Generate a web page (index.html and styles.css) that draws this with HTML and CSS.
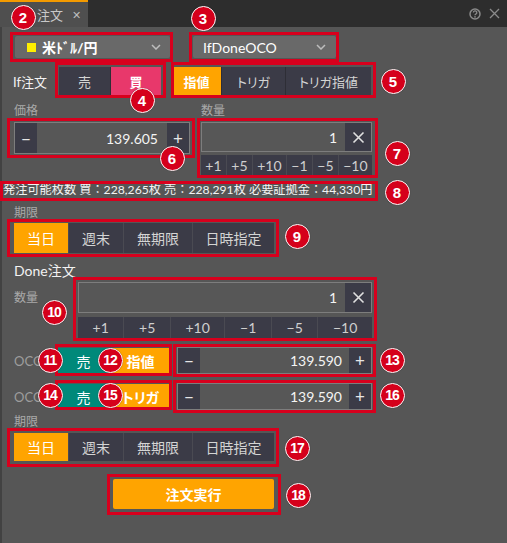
FILE: index.html
```html
<!DOCTYPE html>
<html lang="ja">
<head>
<meta charset="utf-8">
<title>注文</title>
<link rel="stylesheet" href="styles.css">
</head>
<body>
<div class="app">
  <div class="titlebar">
    <div class="tab"><span class="tab-title">注文</span><span class="tab-x">✕</span></div>
    <div class="win-icons">
      <svg class="ico-help" width="12" height="12" viewBox="0 0 12 12"><circle cx="6" cy="6" r="5" fill="none" stroke="#8a8a8a" stroke-width="1.5"/><path d="M4.4 4.6a1.7 1.7 0 1 1 2.4 1.5c-.5.3-.8.6-.8 1.2" fill="none" stroke="#8a8a8a" stroke-width="1.3"/><circle cx="6" cy="8.9" r=".8" fill="#8a8a8a"/></svg>
      <svg class="ico-close" width="11" height="11" viewBox="0 0 11 11"><path d="M1 1l9 9M10 1l-9 9" stroke="#8a8a8a" stroke-width="1.3"/></svg>
    </div>
  </div>

  <div class="content">
    <div class="row1">
      <div class="select sel-ccy"><span class="swatch"></span><span class="sel-text bold">米ﾄﾞﾙ/円</span><svg class="chev" width="10" height="6" viewBox="0 0 10 6"><path d="M1 1l4 4 4-4" fill="none" stroke="#bdbdbd" stroke-width="1.5"/></svg></div>
      <div class="select sel-type"><span class="sel-text">IfDoneOCO</span><svg class="chev" width="10" height="6" viewBox="0 0 10 6"><path d="M1 1l4 4 4-4" fill="none" stroke="#bdbdbd" stroke-width="1.5"/></svg></div>
    </div>

    <div class="row2">
      <div class="lbl-if">If注文</div>
      <div class="group toggle">
        <div class="btn w51">売</div>
        <div class="btn buy w50">買</div>
      </div>
      <div class="group seg-type">
        <div class="btn on w49">指値</div>
        <div class="btn kana w63">トリガ</div>
        <div class="btn kana w85">トリガ指値</div>
      </div>
    </div>

    <div class="row3">
      <div class="col-price">
        <div class="lbl-small">価格</div>
        <div class="stepper st-price">
          <div class="btn sbtn">−</div>
          <div class="val">139.605</div>
          <div class="btn sbtn">+</div>
        </div>
      </div>
      <div class="col-qty">
        <div class="lbl-small">数量</div>
        <div class="qty-input">
          <div class="val">1</div>
          <div class="btn clear"><svg width="13" height="13" viewBox="0 0 13 13"><path d="M1.5 1.5l10 10M11.5 1.5l-10 10" stroke="#e0e0e0" stroke-width="1.6"/></svg></div>
        </div>
        <div class="group qty-btns">
          <div class="btn">+1</div><div class="btn">+5</div><div class="btn">+10</div><div class="btn">−1</div><div class="btn">−5</div><div class="btn">−10</div>
        </div>
      </div>
    </div>

    <div class="info">発注可能枚数 買：228,265枚 売：228,291枚 必要証拠金：44,330円</div>

    <div class="lbl-small lbl-term">期限</div>
    <div class="group period">
      <div class="btn on w54">当日</div>
      <div class="btn w54">週末</div>
      <div class="btn w68">無期限</div>
      <div class="btn w81">日時指定</div>
    </div>

    <div class="done-title">Done注文</div>
    <div class="qty2">
      <div class="lbl-small lbl-qty2">数量</div>
      <div class="qty2-block">
        <div class="qty-input qi2">
          <div class="val">1</div>
          <div class="btn clear"><svg width="13" height="13" viewBox="0 0 13 13"><path d="M1.5 1.5l10 10M11.5 1.5l-10 10" stroke="#e0e0e0" stroke-width="1.6"/></svg></div>
        </div>
        <div class="group qty-btns qb2">
          <div class="btn">+1</div><div class="btn">+5</div><div class="btn">+10</div><div class="btn">−1</div><div class="btn">−5</div><div class="btn">−10</div>
        </div>
      </div>
    </div>

    <div class="oco">
      <div class="lbl-oco">OCO</div>
      <div class="pair">
        <div class="btn sell w53">売</div>
        <div class="btn on w57">指値</div>
      </div>
      <div class="stepper st-oco">
        <div class="btn sbtn">−</div>
        <div class="val">139.590</div>
        <div class="btn sbtn">+</div>
      </div>
    </div>
    <div class="oco oco2">
      <div class="lbl-oco">OCO</div>
      <div class="pair">
        <div class="btn sell w53">売</div>
        <div class="btn on kana w57">トリガ</div>
      </div>
      <div class="stepper st-oco">
        <div class="btn sbtn">−</div>
        <div class="val">139.590</div>
        <div class="btn sbtn">+</div>
      </div>
    </div>

    <div class="lbl-small lbl-term2">期限</div>
    <div class="group period period2">
      <div class="btn on w54">当日</div>
      <div class="btn w54">週末</div>
      <div class="btn w68">無期限</div>
      <div class="btn w81">日時指定</div>
    </div>

    <div class="exec">注文実行</div>
  </div>

  <div class="anno">
    <div class="box b2"></div>
    <div class="box b3"></div>
    <div class="box b4"></div>
    <div class="box b5"></div>
    <div class="box b6"></div>
    <div class="box b7"></div>
    <div class="box b8"></div>
    <div class="box b9"></div>
    <div class="box b10"></div>
    <div class="box b11"></div>
    <div class="box b13"></div>
    <div class="box b14"></div>
    <div class="box b16"></div>
    <div class="box b17"></div>
    <div class="box b18"></div>

    <div class="badge n2">2</div>
    <div class="badge n3">3</div>
    <div class="badge n4">4</div>
    <div class="badge n5">5</div>
    <div class="badge n6">6</div>
    <div class="badge n7">7</div>
    <div class="badge n8">8</div>
    <div class="badge n9">9</div>
    <div class="badge two n10">10</div>
    <div class="badge two n11">11</div>
    <div class="badge two n12">12</div>
    <div class="badge two n13">13</div>
    <div class="badge two n14">14</div>
    <div class="badge two n15">15</div>
    <div class="badge two n16">16</div>
    <div class="badge two n17">17</div>
    <div class="badge two n18">18</div>
  </div>
</div>
</body>
</html>
```

FILE: styles.css
```css
* { box-sizing: border-box; }

html, body {
  margin: 0;
  padding: 0;
  background: #565656;
}

body {
  font-family: Lato, "Noto Sans CJK JP", sans-serif;
  color: #eeeeee;
}

.app {
  position: relative;
  width: 507px;
  height: 543px;
  overflow: hidden;
  background: #565656;
  box-shadow: inset 2px 0 0 #424242;
}

/* title bar */
.titlebar {
  height: 27px;
  background: #2d2d2d;
  display: flex;
  align-items: stretch;
}

.tab {
  width: 88px;
  background: #4f4f4f;
  border-top: 2px solid #f39a00;
  display: flex;
  align-items: center;
  padding-left: 37px;
  gap: 9px;
  color: #c8c8c8;
}

.tab-title { font-size: 13px; }
.tab-x { font-size: 11px; color: #bdbdbd; }

.win-icons {
  margin-left: auto;
  display: flex;
  align-items: center;
  gap: 8px;
  padding-right: 7px;
}

/* content */
.content {
  padding: 9px 0 0 14px;
}

.row1 {
  display: flex;
  gap: 23px;
}

.select {
  height: 22px;
  background: #696969;
  border-radius: 2px;
  display: flex;
  align-items: center;
  font-size: 14px;
  color: #ffffff;
}

.sel-ccy {
  width: 155px;
  margin-left: 1px;
  padding: 0 9px 0 12px;
}

.sel-type {
  width: 143px;
  padding: 0 10px 0 10px;
}

.bold { font-weight: 700; }

.swatch {
  width: 9px;
  height: 9px;
  background: #ffee00;
  margin-right: 6px;
}

.chev { margin-left: auto; }

/* buttons */
.group {
  display: flex;
  gap: 1px;
  background: #2e2e36;
}

.btn {
  display: flex;
  align-items: center;
  justify-content: center;
  background: #3b3b47;
  color: #d4d4d4;
  white-space: nowrap;
}

.btn.on {
  background: #ffa400;
  color: #ffffff;
  font-weight: 700;
}

.btn.buy {
  background: #e8386b;
  color: #ffffff;
  font-weight: 700;
}

.btn.sell {
  background: #00897a;
  color: #ffffff;
}

.kana { font-feature-settings: "palt"; }

.w49 { width: 49px; }
.w50 { width: 50px; }
.w51 { width: 51px; }
.w53 { width: 53px; }
.w54 { width: 54px; }
.w57 { width: 57px; }
.w63 { width: 63px; }
.w68 { width: 68px; }
.w81 { width: 81px; }
.w85 { width: 85px; }

.row2 {
  display: flex;
  align-items: center;
  height: 28px;
  margin-top: 9px;
  font-size: 13px;
}

.lbl-if {
  width: 46px;
  margin-left: -1px;
  color: #f2f2f2;
}

.toggle, .seg-type { height: 28px; border-radius: 2px; }

.seg-type { margin-left: 11px; }

/* price / qty */
.row3 {
  display: flex;
  gap: 11px;
  margin-top: 8px;
  align-items: flex-start;
}

.col-price { width: 176px; }
.col-qty { width: 171px; }

.lbl-small {
  font-size: 12px;
  color: #a9a9a9;
  line-height: 16px;
  height: 16px;
}

.stepper {
  display: flex;
  border: 1px solid #7d7d7d;
  background: #575757;
}

.st-price {
  margin-top: 3px;
  height: 32px;
}

.sbtn {
  width: 22px;
  font-size: 17px;
  color: #e6e6e6;
}

.val {
  flex: 1;
  display: flex;
  align-items: center;
  justify-content: flex-end;
  padding-right: 9px;
  font-size: 14px;
  color: #f4f4f4;
}

.qty-input {
  display: flex;
  margin-top: 3px;
  height: 30px;
  border: 1px solid #7d7d7d;
  background: #575757;
}

.qty-input .val { padding-right: 8px; }

.clear { width: 26px; }

.qty-btns {
  margin-top: 3px;
  height: 21px;
  background: #4a4a52;
}

.qty-btns .btn {
  flex: 1 1 auto;
  font-size: 14px;
  color: #cfcfcf;
}

/* info */
.info {
  margin: 5px 0 0 -11px;
  font-size: 12.2px;
  line-height: 18px;
  color: #f2f2f2;
  white-space: nowrap;
}

.lbl-term { margin-top: 6px; }

.period {
  margin-top: 2px;
  height: 30px;
  width: 260px;
  font-size: 14px;
  background: #4a4a52;
  border-radius: 2px;
}

.period .btn.on { font-weight: 400; }

.done-title {
  margin-top: 9px;
  font-size: 14px;
  line-height: 18px;
  color: #f2f2f2;
}

.qty2 {
  display: flex;
  margin-top: 2px;
}

.lbl-qty2 {
  width: 64px;
  margin-top: 8px;
}

.qty2-block { width: 294px; }

.qi2 { margin-top: 0; height: 31px; }

.qb2 { margin-top: 4px; }

/* OCO */
.oco {
  display: flex;
  align-items: center;
  margin-top: 9px;
}

.oco2 { margin-top: 9px; }

.lbl-oco {
  width: 43px;
  font-size: 13px;
  color: #9d9d9d;
}

.pair {
  display: flex;
  gap: 2px;
  height: 26px;
  background: #6d6d6d;
  font-size: 14px;
}

.st-oco {
  margin-left: 8px;
  width: 195px;
  height: 27px;
}

.st-oco .val { padding-right: 7px; }

.lbl-term2 { margin-top: 4px; }

.period2 { margin-top: 3px; height: 28px; }

.exec {
  margin: 18px 0 0 99px;
  width: 161px;
  height: 30px;
  background: #ffa400;
  border-radius: 2px;
  display: flex;
  align-items: center;
  justify-content: center;
  font-size: 14px;
  font-weight: 700;
  color: #ffffff;
}

/* annotations overlay */
.anno {
  position: absolute;
  left: 0;
  top: 0;
  width: 507px;
  height: 543px;
  pointer-events: none;
}

.box {
  position: absolute;
  border: 3px solid #d7001d;
}

.b2  { left: 10px;  top: 32px;  width: 163px; height: 30px; }
.b3  { left: 189px; top: 32px;  width: 150px; height: 30px; }
.b4  { left: 55px;  top: 62px;  width: 111px; height: 36px; }
.b5  { left: 171px; top: 62px;  width: 205px; height: 36px; }
.b6  { left: 7px;   top: 118px; width: 188px; height: 40px; }
.b7  { left: 197px; top: 118px; width: 181px; height: 60px; }
.b8  { left: 0;     top: 181px; width: 378px; height: 20px; }
.b9  { left: 7px;   top: 219px; width: 272px; height: 38px; }
.b10 { left: 73px;  top: 277px; width: 304px; height: 64px; }
.b11 { left: 55px;  top: 344px; width: 117px; height: 32px; }
.b13 { left: 173px; top: 344px; width: 203px; height: 33px; }
.b14 { left: 55px;  top: 380px; width: 117px; height: 30px; }
.b16 { left: 173px; top: 380px; width: 203px; height: 33px; }
.b17 { left: 7px;   top: 428px; width: 272px; height: 39px; }
.b18 { left: 107px; top: 474px; width: 174px; height: 41px; }

.badge {
  position: absolute;
  width: 25px;
  height: 25px;
  margin: -12.5px 0 0 -12.5px;
  border-radius: 50%;
  background: #d5001b;
  border: 1.5px solid #ffffff;
  color: #ffffff;
  font-family: "Liberation Sans", Arial, sans-serif;
  font-weight: 700;
  font-size: 15px;
  display: flex;
  align-items: center;
  justify-content: center;
  box-shadow: 0 0 1px rgba(0,0,0,0.4);
}

.badge.two { font-size: 14px; letter-spacing: -1px; }

.n2  { left: 23px;  top: 17px; }
.n3  { left: 203px; top: 18px; }
.n4  { left: 142px; top: 100px; }
.n5  { left: 393px; top: 81px; }
.n6  { left: 172px; top: 158px; }
.n7  { left: 397px; top: 153px; }
.n8  { left: 397px; top: 192px; }
.n9  { left: 297px; top: 236px; }
.n10 { left: 54px;  top: 312px; }
.n11 { left: 50px;  top: 360px; }
.n12 { left: 110px; top: 360px; }
.n13 { left: 392px; top: 360px; }
.n14 { left: 50px;  top: 395px; }
.n15 { left: 110px; top: 395px; }
.n16 { left: 392px; top: 395px; }
.n17 { left: 297px; top: 448px; }
.n18 { left: 298px; top: 495px; }
```
